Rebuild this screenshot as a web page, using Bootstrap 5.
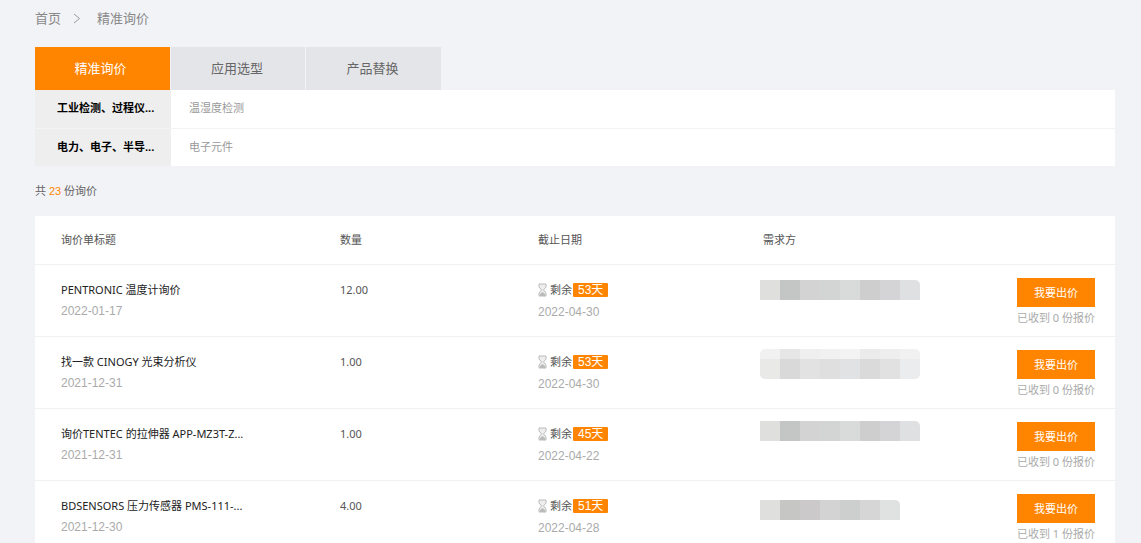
<!DOCTYPE html>
<html lang="zh"><head><meta charset="utf-8"><title>精准询价</title>
<link rel="stylesheet" href="https://cdn.jsdelivr.net/npm/bootstrap@5.3.0/dist/css/bootstrap.min.css">
<style>
html,body{height:543px;overflow:hidden}
body{background:#f2f3f7;font-family:"Noto Sans","Noto Sans CJK SC",sans-serif;font-size:11px;color:#555;padding:0 26px 0 35px}
.crumbs{height:47px;font-size:13px;color:#888;padding-top:8px;line-height:20px}
.crumbs svg{margin:0 16px 0 12px;vertical-align:-1px}
.tabs-bar{gap:1px;height:43px}
.tab-item{width:134px;background:#e4e5e9;color:#666;font-size:13px;line-height:43px;text-align:center;padding-right:2px}
.tab-item.on{background:#ff8400;color:#fff;width:135px;padding-right:4px}
.tab-item.last{width:135px}
.filter-row{height:39px;background:#fff;border-bottom:1px solid #f2f3f7}
.filter-row:last-child{height:37px;border-bottom:0}
.filter-name{width:136px;background:#eee;color:#000;font-weight:700;line-height:36px;padding:0 0 0 22px;white-space:nowrap}
.filter-val{padding-left:18px;line-height:36px;color:#999}
.total{height:50px;line-height:49px;color:#666}
.total em{font-style:normal;color:#ff8400;font-family:"Liberation Sans",sans-serif}
.sheet{background:#fff}
.line{height:72px;border-top:1px solid #f0f1f3;padding:15px 20px 0 26px;color:#555}
.head{height:48px;padding:14px 20px 0 26px;line-height:20px;color:#555}
.c1{width:279px}.c2{width:198px}.c3{width:222px}.c4{flex:1}
.c5{width:78px}
.head .c4{padding-left:3px}
.line .txt{line-height:20px}
.ttl{color:#222;white-space:nowrap}
.sub{color:#aaa;line-height:20px;margin-top:1px;font-family:"Liberation Sans",sans-serif;font-size:12px}
.c3 .sub{margin-top:2px}
.left-tag{background:#ff8400;color:#fff;border-radius:1px;padding:0 5px;line-height:14px;height:14px;display:inline-block;margin-left:1px;font-size:12px;font-family:"Liberation Sans","Noto Sans CJK SC",sans-serif}
.hg{vertical-align:-3px;margin-right:3px}
.price-btn{width:78px;height:29px;background:#ff8400;color:#fff;border:0;border-radius:0;font-size:11px;line-height:29px;padding:0;display:block;margin-top:-2px}
.price-btn:hover{background:#ff8400;color:#fff}
.got{color:#aaa;text-align:right;line-height:20px;margin-top:1px;white-space:nowrap}
.mosaic{width:160px;border-radius:0 5px 0 0;overflow:hidden}
.mosaic div.d-flex>span{width:20px;height:20px;display:block}
.mosaic.tall{margin-top:-3px;border-radius:5px}
.mosaic.tall div.d-flex:first-child>span{height:10px}
.mosaic.up{margin-top:-3px}
.mosaic.down{margin-top:4px;width:140px}
</style></head><body>
<div class="crumbs">首页<svg width="8" height="11" viewBox="0 0 8 11"><path d="M1 1l5.500 4.500L1 10" fill="none" stroke="#999"/></svg>精准询价</div>
<div class="d-flex tabs-bar"><div class="tab-item on">精准询价</div><div class="tab-item">应用选型</div><div class="tab-item last">产品替换</div></div>
<div>
<div class="filter-row d-flex"><div class="filter-name">工业检测、过程仪...</div><div class="filter-val">温湿度检测</div></div>
<div class="filter-row d-flex"><div class="filter-name">电力、电子、半导...</div><div class="filter-val">电子元件</div></div>
</div>
<div class="total">共 <em>23</em> 份询价</div>
<div class="sheet">
<div class="head d-flex"><div class="c1">询价单标题</div><div class="c2">数量</div><div class="c3">截止日期</div><div class="c4">需求方</div></div>

<div class="line d-flex"><div class="c1"><div class="txt ttl">PENTRONIC 温度计询价</div><div class="sub">2022-01-17</div></div><div class="c2 txt">12.00</div>
<div class="c3"><div class="txt"><svg class="hg" width="9" height="14" viewBox="0 0 9 14"><path d="M1 1h7v3L5.500 7 8 10v3H1v-3l2.500-3L1 4z" fill="#eee" stroke="#bbb"/><path d="M2 13h5v-2l-2.500-2L2 11z" fill="#bbb"/></svg>剩余<span class="left-tag">53天</span></div><div class="sub">2022-04-30</div></div>
<div class="c4"><div class="mosaic"><div class="d-flex"><span style="background:#dfdfdd"></span><span style="background:#c4c6c5"></span><span style="background:#d3d3d3"></span><span style="background:#d3d4d4"></span><span style="background:#d9dbda"></span><span style="background:#cdcecd"></span><span style="background:#d4d3d5"></span><span style="background:#dfe0e2"></span></div></div></div>
<div class="c5"><button class="btn price-btn">我要出价</button><div class="got">已收到 0 份报价</div></div></div>

<div class="line d-flex"><div class="c1"><div class="txt ttl">找一款 CINOGY 光束分析仪</div><div class="sub">2021-12-31</div></div><div class="c2 txt">1.00</div>
<div class="c3"><div class="txt"><svg class="hg" width="9" height="14" viewBox="0 0 9 14"><path d="M1 1h7v3L5.500 7 8 10v3H1v-3l2.500-3L1 4z" fill="#eee" stroke="#bbb"/><path d="M2 13h5v-2l-2.500-2L2 11z" fill="#bbb"/></svg>剩余<span class="left-tag">53天</span></div><div class="sub">2022-04-30</div></div>
<div class="c4"><div class="mosaic tall"><div class="d-flex"><span style="background:#f1f1f1"></span><span style="background:#e6e6e6"></span><span style="background:#efefef"></span><span style="background:#f1f1f1"></span><span style="background:#f3f3f3"></span><span style="background:#ebebeb"></span><span style="background:#eeeeee"></span><span style="background:#f1f1f1"></span></div><div class="d-flex"><span style="background:#e9e9e8"></span><span style="background:#d9d9d9"></span><span style="background:#e2e2e2"></span><span style="background:#dfdfdf"></span><span style="background:#e1e2e3"></span><span style="background:#d9dad9"></span><span style="background:#e1e1e2"></span><span style="background:#ebeced"></span></div></div></div>
<div class="c5"><button class="btn price-btn">我要出价</button><div class="got">已收到 0 份报价</div></div></div>

<div class="line d-flex"><div class="c1"><div class="txt ttl">询价TENTEC 的拉伸器 APP-MZ3T-Z...</div><div class="sub">2021-12-31</div></div><div class="c2 txt">1.00</div>
<div class="c3"><div class="txt"><svg class="hg" width="9" height="14" viewBox="0 0 9 14"><path d="M1 1h7v3L5.500 7 8 10v3H1v-3l2.500-3L1 4z" fill="#eee" stroke="#bbb"/><path d="M2 13h5v-2l-2.500-2L2 11z" fill="#bbb"/></svg>剩余<span class="left-tag">45天</span></div><div class="sub">2022-04-22</div></div>
<div class="c4"><div class="mosaic up"><div class="d-flex"><span style="background:#dfdfdd"></span><span style="background:#c4c6c5"></span><span style="background:#d3d3d3"></span><span style="background:#d3d4d4"></span><span style="background:#d9dbda"></span><span style="background:#cdcecd"></span><span style="background:#d4d3d5"></span><span style="background:#dfe0e2"></span></div></div></div>
<div class="c5"><button class="btn price-btn">我要出价</button><div class="got">已收到 0 份报价</div></div></div>

<div class="line d-flex"><div class="c1"><div class="txt ttl">BDSENSORS 压力传感器 PMS-111-...</div><div class="sub">2021-12-30</div></div><div class="c2 txt">4.00</div>
<div class="c3"><div class="txt"><svg class="hg" width="9" height="14" viewBox="0 0 9 14"><path d="M1 1h7v3L5.500 7 8 10v3H1v-3l2.500-3L1 4z" fill="#eee" stroke="#bbb"/><path d="M2 13h5v-2l-2.500-2L2 11z" fill="#bbb"/></svg>剩余<span class="left-tag">51天</span></div><div class="sub">2022-04-28</div></div>
<div class="c4"><div class="mosaic down"><div class="d-flex"><span style="background:#dfdfdd"></span><span style="background:#c6c6c5"></span><span style="background:#cbc9ca"></span><span style="background:#d3d3d3"></span><span style="background:#cdcfce"></span><span style="background:#d7d6d6"></span><span style="background:#e0e2e1"></span></div></div></div>
<div class="c5"><button class="btn price-btn">我要出价</button><div class="got">已收到 1 份报价</div></div></div>
</div>
</body></html>
